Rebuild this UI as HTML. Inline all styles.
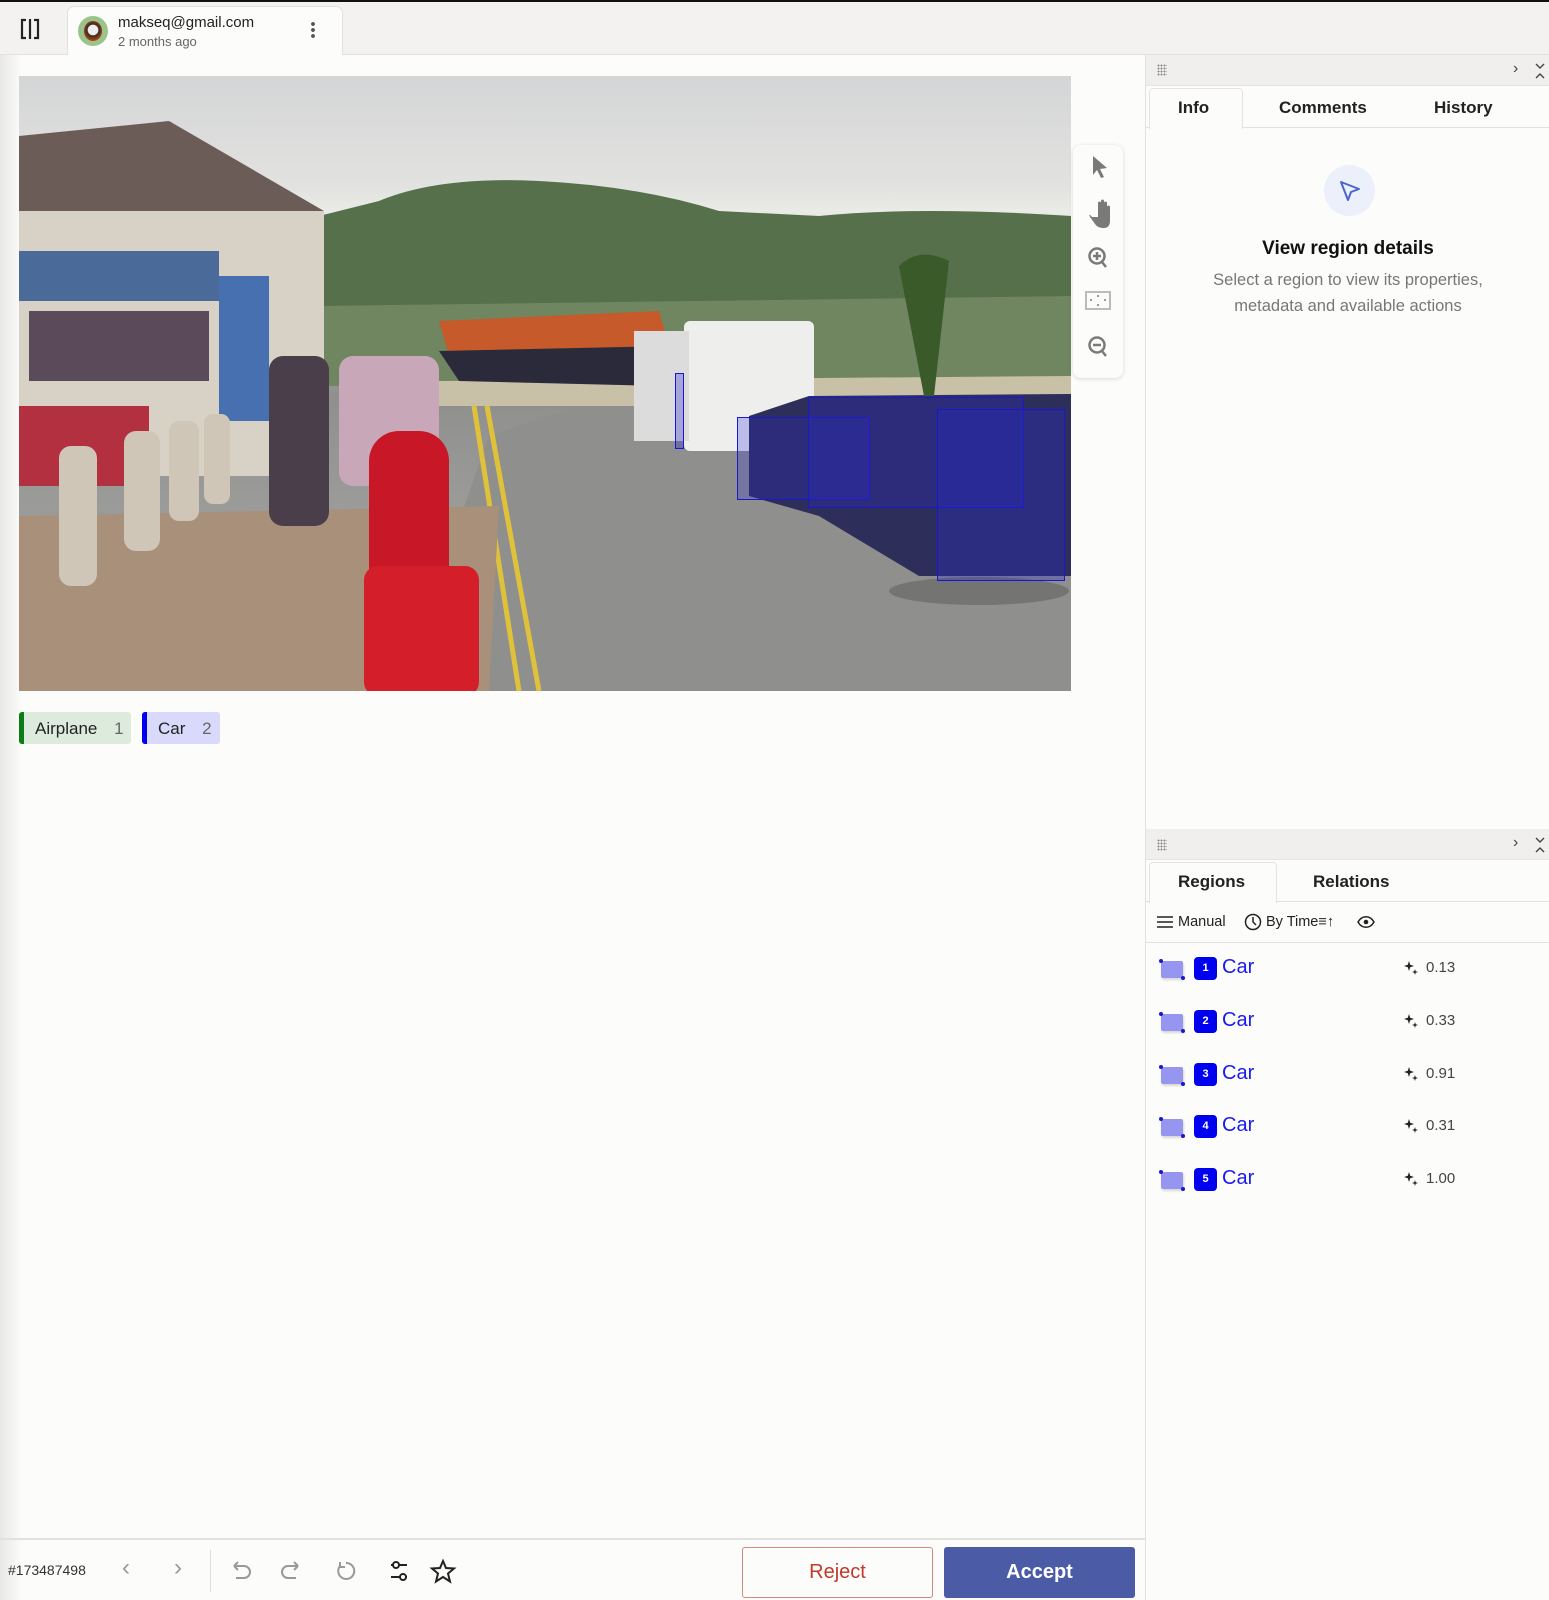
<!DOCTYPE html>
<html><head><meta charset="utf-8">
<style>
*{box-sizing:border-box;margin:0;padding:0}
body{width:1549px;height:1600px;background:#fcfcfb;font-family:"Liberation Sans",sans-serif;color:#222;position:relative;overflow:hidden}
.abs{position:absolute}
.topbar{left:0;top:0;width:1549px;height:55px;background:#f3f2f0;border-top:2px solid #111;border-bottom:1px solid #e3e1de}
.tab{left:67px;top:6px;width:276px;height:50px;background:#fcfcfb;border:1px solid #e3e1de;border-bottom:none;border-radius:7px 7px 0 0}
.left{left:0;top:55px;width:1145px;height:1545px;background:linear-gradient(90deg,#e8e8e6 0,#fcfcfb 22px)}
.photo{left:19px;top:76px;width:1052px;height:615px;overflow:hidden;background:linear-gradient(180deg,#d4d5d6 0,#e2e2e0 18%,#eaeae6 22%,#8f8f8d 52%,#9b9b99 70%,#8c8c8a 100%)}
.rp{left:1145px;top:55px;width:404px;height:1545px;background:#fcfcfb;border-left:1px solid #e3e1de}
.ph{height:31px;background:#f0efed;border-bottom:1px solid #e6e4e1;position:absolute;left:0;width:404px}
.tabs{position:absolute;left:0;width:404px;height:42px;border-bottom:1px solid #e3e1de;font-size:17px;font-weight:600}
.tabs span{position:absolute;top:12px}
.bb{position:absolute;left:0;top:1538px;width:1145px;height:62px;border-top:2px solid #e3e1de}
</style></head><body>
<div class="abs topbar"></div>
<svg class="abs" style="left:19px;top:17px" width="22" height="24" viewBox="0 0 22 24"><path d="M7 3H3v18h4M15 3h4v18h-4M11 2v20" fill="none" stroke="#222" stroke-width="2.2"/></svg>
<div class="abs tab"></div>
<div class="abs" style="left:78px;top:16px;width:30px;height:30px;border-radius:50%;background:#9bc48a"><div style="margin:5px 6px;width:18px;height:20px;border-radius:50%;background:radial-gradient(circle at 50% 45%,#eee 0 35%,#3a2a22 40%,#c04a1a 80%)"></div></div>
<div class="abs" style="left:118px;top:14px;font-size:15px;color:#222">makseq@gmail.com</div>
<div class="abs" style="left:118px;top:34px;font-size:13px;color:#666">2 months ago</div>
<div class="abs" style="left:311px;top:21px;width:4px;height:18px;background:radial-gradient(circle,#555 1.8px,transparent 2px) 0 0/4px 6px"></div>

<div class="abs left"></div>
<div class="abs photo">
 <svg class="abs" style="left:0;top:0" width="1052" height="615">
  <path d="M300 140 L360 125 Q420 100 520 105 Q620 110 700 135 L800 140 Q900 130 1052 140 L1052 310 L300 310Z" fill="#55704a"/>
  <path d="M300 230 L1052 220 L1052 310 L300 310Z" fill="#6f8660"/>
  <path d="M420 305 L1052 300 L1052 330 L420 330Z" fill="#c9c0a8"/>
  <path d="M380 615 L470 360 L560 330 L1052 340 L1052 615Z" fill="#8f8f8d"/>
  <path d="M455 330 L500 615 M468 330 L520 615" stroke="#e0c23a" stroke-width="5"/>
  <path d="M0 615 L0 440 L480 430 L470 615Z" fill="#a8907a"/>
  <path d="M0 60 L150 45 L305 135 L0 135Z" fill="#6c5c58"/>
  <path d="M0 135 L305 135 L305 400 L0 400Z" fill="#d8d2c6"/>
  <path d="M0 175 L200 175 L200 225 L0 225Z" fill="#4a6a9a"/>
  <path d="M10 235 L190 235 L190 305 L10 305Z" fill="#5a4a5a"/>
  <path d="M200 200 L250 200 L250 345 L200 345Z" fill="#4670b0"/>
  <path d="M0 330 L130 330 L130 410 L0 410Z" fill="#b23040"/>
  <rect x="40" y="370" width="38" height="140" rx="12" fill="#cfc6b8"/>
  <rect x="105" y="355" width="36" height="120" rx="12" fill="#cfc6b8"/>
  <rect x="150" y="345" width="30" height="100" rx="10" fill="#cfc6b8"/>
  <rect x="185" y="338" width="26" height="90" rx="9" fill="#cfc6b8"/>
  <rect x="250" y="280" width="60" height="170" rx="14" fill="#4a3e4a"/>
  <rect x="320" y="280" width="100" height="130" rx="14" fill="#c8a8b8"/>
  <rect x="350" y="355" width="80" height="170" rx="30" fill="#c81828"/>
  <rect x="345" y="490" width="115" height="130" rx="14" fill="#d41f2b"/>
  <path d="M420 245 L640 235 L650 270 L430 280Z" fill="#c65a2a"/>
  <path d="M420 275 L650 270 L640 310 L440 305Z" fill="#2a2a3a"/>
  <rect x="665" y="245" width="130" height="130" rx="6" fill="#eeeeec"/>
  <rect x="615" y="255" width="55" height="110" fill="#dcdcdc"/>
  <path d="M730 340 L790 320 L1052 318 L1052 500 L900 500 L800 440 L730 420Z" fill="#2e2e5a"/>
  <ellipse cx="960" cy="515" rx="90" ry="14" fill="#5a5a5a" opacity=".5"/>
  <path d="M880 190 Q900 170 930 185 L915 320 L905 320Z" fill="#3a5a2a"/>
 </svg>
 <div class="abs" style="left:718px;top:341px;width:133px;height:83px;border:1px solid #1818d0;background:rgba(40,40,220,.25)"></div>
 <div class="abs" style="left:789px;top:321px;width:216px;height:111px;border:1px solid #1818d0;background:rgba(40,40,220,.25)"></div>
 <div class="abs" style="left:918px;top:333px;width:128px;height:172px;border:1px solid #1818d0;background:rgba(40,40,220,.3)"></div>
 <div class="abs" style="left:656px;top:297px;width:9px;height:76px;border:1px solid #1818d0;background:rgba(40,40,220,.3)"></div>
</div>
<div class="abs" style="left:1073px;top:145px;width:50px;height:233px;background:#fcfcfb;border-radius:8px;box-shadow:0 1px 4px rgba(0,0,0,.15)">
 <svg width="50" height="233" viewBox="0 0 50 233" fill="none" stroke="#7a7a7a" stroke-width="2.5">
  <path d="M20 11l14 12-7 1 4 8-3 1-4-8-4 5z" fill="#7a7a7a" stroke="none"/>
  <path d="M19 72c-3-4-3-2-2 0l5 7c2 3 5 4 9 4 4 0 6-3 6-7V62c0-2-3-2-3 0v6V58c0-2-3-2-3 0v9V56c0-2-3-2-3 0v11V58c0-2-3-2-3 0v14z" fill="#7a7a7a" stroke="none"/>
  <circle cx="24" cy="111" r="7.5"/><path d="M29 117l4 5M24 107v8M20 111h8"/>
  <rect x="13" y="147" width="24" height="17" stroke-width="2" stroke="#bbb"/><path d="M25 150v2M25 159v2M17 155h2M31 155h2" stroke-width="1.5"/>
  <circle cx="24" cy="200" r="7.5"/><path d="M29 206l4 5M20 200h8"/>
 </svg>
</div>
<div class="abs" style="left:19px;top:712px;width:112px;height:32px;background:#dcebdb;border-left:5px solid #0a7d16;border-radius:3px;font-size:17px;padding:7px 0 0 11px;color:#222">Airplane <span style="color:#666;margin-left:12px">1</span></div>
<div class="abs" style="left:142px;top:712px;width:78px;height:32px;background:#d9d9fb;border-left:5px solid #0000f0;border-radius:3px;font-size:17px;padding:7px 0 0 11px;color:#222">Car <span style="color:#666;margin-left:12px">2</span></div>

<div class="bb">
 <div class="abs" style="left:8px;top:22px;font-size:14px;color:#333">#173487498</div>
 <div class="abs" style="left:122px;top:14px;font-size:24px;color:#999">&#8249;</div>
 <div class="abs" style="left:174px;top:14px;font-size:24px;color:#999">&#8250;</div>
 <div class="abs" style="left:210px;top:10px;width:1px;height:42px;background:#ddd"></div>
 <svg class="abs" style="left:228px;top:18px" width="230" height="26" viewBox="0 0 230 26" fill="none" stroke="#999" stroke-width="2">
  <path d="M6 8h10a6 6 0 010 12H8M6 8l4-4M6 8l4 4"/>
  <path d="M70 8H60a6 6 0 000 12h8M70 8l-4-4M70 8l-4 4"/>
  <path d="M118 5a8 8 0 11-6 3M112 4v5h5"/>
  <g stroke="#222"><path d="M163 7h16M163 19h16"/><circle cx="168" cy="7" r="3" fill="#fcfcfb"/><circle cx="175" cy="19" r="3" fill="#fcfcfb"/>
  <path d="M215 3l3 7 8 .5-6 5 2 8-7-4.5-7 4.5 2-8-6-5 8-.5z"/></g>
 </svg>
 <div class="abs" style="left:742px;top:7px;width:191px;height:51px;border:1px solid #d08a80;border-radius:3px;color:#c0392b;font-size:20px;text-align:center;line-height:49px">Reject</div>
 <div class="abs" style="left:944px;top:7px;width:191px;height:51px;background:#4b5ba6;border-radius:3px;color:#fff;font-size:20px;font-weight:bold;text-align:center;line-height:51px">Accept</div>
</div>

<div class="abs rp">
 <div class="ph" style="top:0"></div>
 <div class="abs" style="left:11px;top:9px;width:10px;height:12px;background:radial-gradient(circle,#888 0.8px,transparent 1.1px) 0 0/3px 3px"></div>
 <div class="abs" style="left:367px;top:5px;font-size:16px;color:#444">&#8250;</div>
 <svg class="abs" style="left:389px;top:8px" width="10" height="16"><path d="M1 1l4 4 4-4M1 15l4-4 4 4" fill="none" stroke="#444" stroke-width="1.4"/></svg>
 <div class="tabs" style="top:31px"><div class="abs" style="left:3px;top:2px;width:94px;height:41px;background:#fcfcfb;border:1px solid #e6e4e1;border-bottom:none;border-radius:4px 4px 0 0"></div><span style="left:32px">Info</span><span style="left:133px">Comments</span><span style="left:288px">History</span></div>
 <div class="abs" style="left:178px;top:110px;width:51px;height:51px;border-radius:50%;background:#ecf0fb"></div>
 <svg class="abs" style="left:191px;top:123px" width="26" height="26" viewBox="0 0 26 26"><path d="M4 4l18 7-8 3-3 8z" fill="none" stroke="#4a64d0" stroke-width="2" stroke-linejoin="round"/></svg>
 <div class="abs" style="left:0;top:183px;width:404px;text-align:center;font-size:19px;font-weight:600;color:#111">View region details</div>
 <div class="abs" style="left:0;top:212px;width:404px;text-align:center;font-size:16.5px;line-height:26px;color:#777">Select a region to view its properties,<br>metadata and available actions</div>

 <div class="ph" style="top:774px"></div>
 <div class="abs" style="left:11px;top:784px;width:10px;height:12px;background:radial-gradient(circle,#888 0.8px,transparent 1.1px) 0 0/3px 3px"></div>
 <div class="abs" style="left:367px;top:779px;font-size:16px;color:#444">&#8250;</div>
 <svg class="abs" style="left:389px;top:782px" width="10" height="16"><path d="M1 1l4 4 4-4M1 15l4-4 4 4" fill="none" stroke="#444" stroke-width="1.4"/></svg>
 <div class="tabs" style="top:805px"><div class="abs" style="left:3px;top:2px;width:128px;height:41px;background:#fcfcfb;border:1px solid #e6e4e1;border-bottom:none;border-radius:4px 4px 0 0"></div><span style="left:32px">Regions</span><span style="left:167px">Relations</span></div>
 <div class="abs" style="left:0;top:847px;width:404px;height:41px;border-bottom:1px solid #e3e1de;font-size:14.5px;color:#222">
  <svg class="abs" style="left:11px;top:14px" width="16" height="12"><path d="M0 1h16M0 6h16M0 11h16" stroke="#222" stroke-width="1.6"/></svg>
  <span class="abs" style="left:32px;top:12px">Manual</span>
  <svg class="abs" style="left:98px;top:11px" width="18" height="18"><circle cx="9" cy="9" r="7.5" fill="none" stroke="#222" stroke-width="1.5"/><path d="M9 4v5l3 3" fill="none" stroke="#222" stroke-width="1.5"/></svg>
  <span class="abs" style="left:120px;top:12px">By Time&#8801;&#8593;</span>
  <svg class="abs" style="left:211px;top:13px" width="18" height="14"><path d="M1 7c4-7 12-7 16 0-4 7-12 7-16 0z" fill="none" stroke="#222" stroke-width="1.5"/><circle cx="9" cy="7" r="2.3" fill="#222"/></svg>
 </div>
</div>

<style>
.ri{position:absolute;left:1161px;width:22px;height:17px;background:#9696f0;border-radius:2px;box-shadow:1px 2px 2px rgba(0,0,0,.15)}
.ri:before,.ri:after{content:"";position:absolute;width:4px;height:4px;border-radius:50%;background:#1818d0}
.ri:before{left:-2px;top:-2px}.ri:after{right:-2px;bottom:-2px}
.rn{position:absolute;left:1194px;width:23px;height:23px;background:#0000f0;border-radius:4px;color:#fff;font-size:11px;font-weight:bold;text-align:center;line-height:23px}
.rl{position:absolute;left:1222px;font-size:20px;color:#1a1af0}
.rs{position:absolute;left:1403px;width:16px;height:16px}
.rv{position:absolute;left:1426px;font-size:15px;color:#444}
</style>
<svg width="0" height="0" style="position:absolute"><defs><g id="sp"><path d="M6 1l1.2 3.8L11 6 7.2 7.2 6 11 4.8 7.2 1 6l3.8-1.2z M12 9l.7 2.3L15 12l-2.3.7L12 15l-.7-2.3L9 12l2.3-.7z" fill="#222"/></g></defs></svg>
<div class="ri" style="top:961px"></div><div class="rn" style="top:957px">1</div><div class="rl" style="top:956px">Car</div><svg class="rs" style="top:960px"><use href="#sp"/></svg><div class="rv" style="top:959px">0.13</div>
<div class="ri" style="top:1014px"></div><div class="rn" style="top:1010px">2</div><div class="rl" style="top:1009px">Car</div><svg class="rs" style="top:1013px"><use href="#sp"/></svg><div class="rv" style="top:1012px">0.33</div>
<div class="ri" style="top:1067px"></div><div class="rn" style="top:1063px">3</div><div class="rl" style="top:1062px">Car</div><svg class="rs" style="top:1066px"><use href="#sp"/></svg><div class="rv" style="top:1065px">0.91</div>
<div class="ri" style="top:1119px"></div><div class="rn" style="top:1115px">4</div><div class="rl" style="top:1114px">Car</div><svg class="rs" style="top:1118px"><use href="#sp"/></svg><div class="rv" style="top:1117px">0.31</div>
<div class="ri" style="top:1172px"></div><div class="rn" style="top:1168px">5</div><div class="rl" style="top:1167px">Car</div><svg class="rs" style="top:1171px"><use href="#sp"/></svg><div class="rv" style="top:1170px">1.00</div>
</body></html>
